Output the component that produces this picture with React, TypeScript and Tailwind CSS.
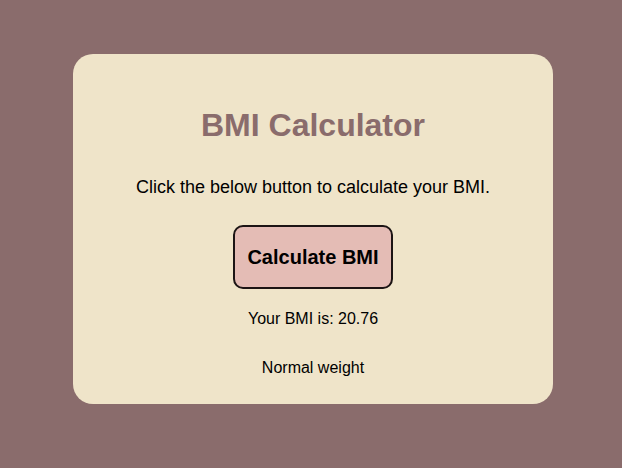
import React, { useState } from 'react';

export default function App() {
  const [bmi] = useState(20.76);

  return (
    <div
      className="min-h-screen w-full bg-[#8a6c6c] pt-[54px] pl-[73px]"
      style={{ fontFamily: '"Liberation Sans", Arial, sans-serif' }}
    >
      <div className="w-[480px] h-[350px] bg-[#efe4c9] rounded-[20px] flex flex-col items-center pt-[53px] text-black">
        <h1 className="text-[32px] leading-[37px] font-bold text-[#8a6c6c]">BMI Calculator</h1>
        <p className="mt-[33px] text-[18px] leading-[21px]">Click the below button to calculate your BMI.</p>
        <button className="mt-[27px] w-[160px] h-[64px] bg-[#e4bcb5] border-2 border-[#1c1414] rounded-[10px] text-[20px] font-bold">
          Calculate BMI
        </button>
        <p className="mt-[21px] text-[16px] leading-[18px]">Your BMI is: {bmi.toFixed(2)}</p>
        <p className="mt-[31px] text-[16px] leading-[18px]">Normal weight</p>
      </div>
    </div>
  );
}
